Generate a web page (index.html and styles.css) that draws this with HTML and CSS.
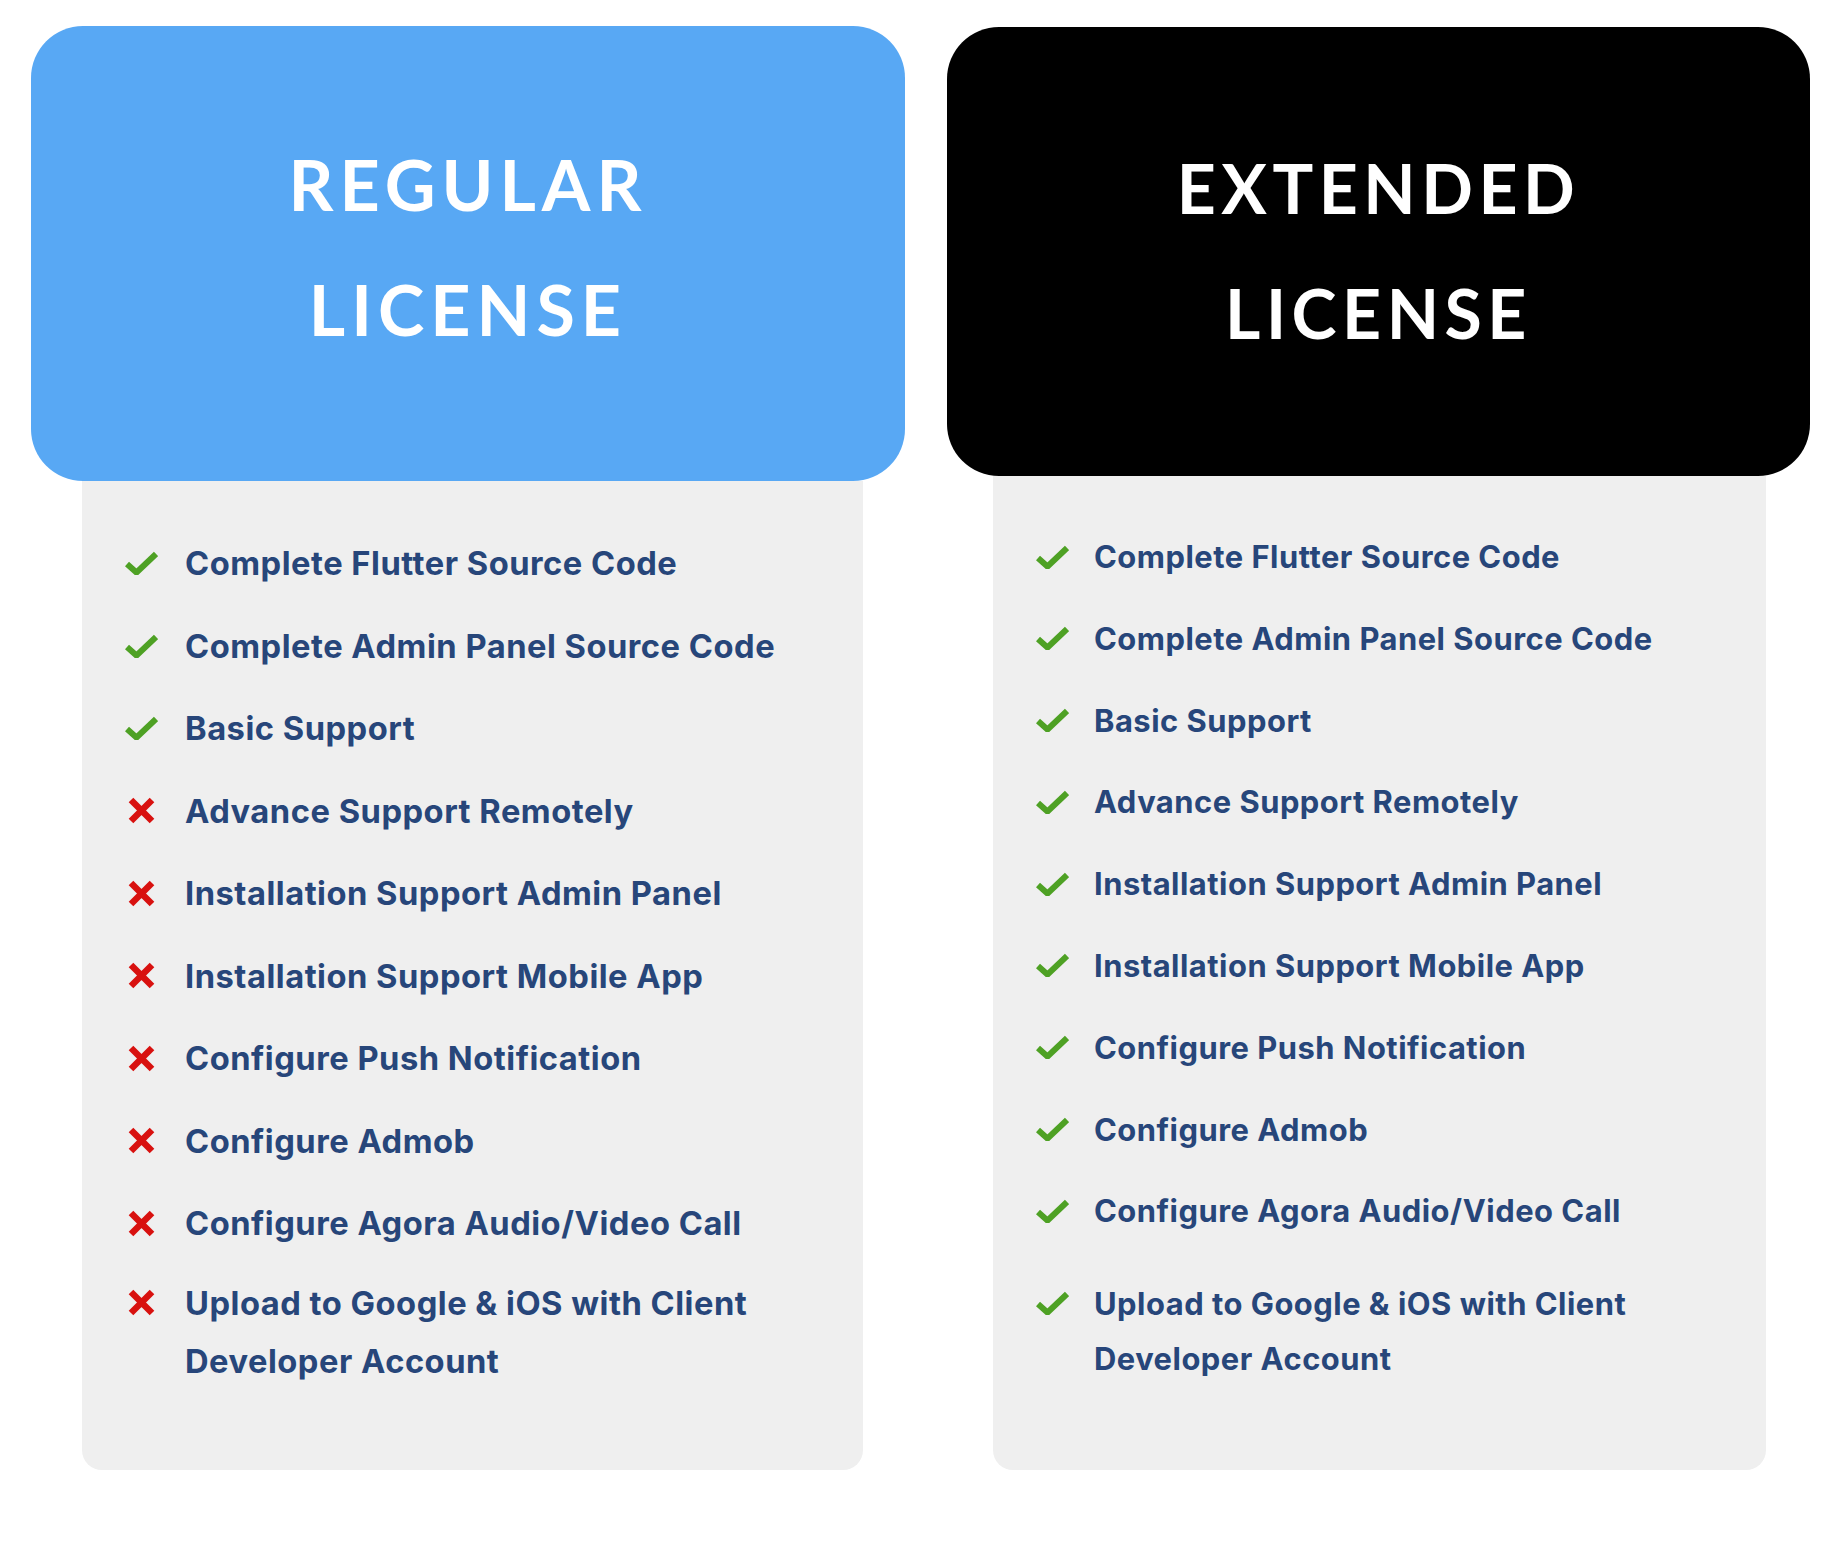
FILE: index.html
```html
<!DOCTYPE html>
<html lang="en">
<head>
<meta charset="utf-8">
<title>Licenses</title>
<link rel="stylesheet" href="styles.css">
</head>
<body>
<main class="pricing">
  <section class="plan plan-regular">
    <header class="plan-head head-blue">
      <h2 class="plan-title">REGULAR<br>LICENSE</h2>
    </header>
    <div class="plan-body body-regular">
      <ul class="features">
        <li class="feature"><span class="ico"><svg class="check" viewBox="0 0 33 24"><path d="M2 13 L11.5 21.5 L31 3"/></svg></span><span class="ftext">Complete Flutter Source Code</span></li>
        <li class="feature"><span class="ico"><svg class="check" viewBox="0 0 33 24"><path d="M2 13 L11.5 21.5 L31 3"/></svg></span><span class="ftext">Complete Admin Panel Source Code</span></li>
        <li class="feature"><span class="ico"><svg class="check" viewBox="0 0 33 24"><path d="M2 13 L11.5 21.5 L31 3"/></svg></span><span class="ftext">Basic Support</span></li>
        <li class="feature"><span class="ico"><svg class="cross" viewBox="0 0 27 27"><path d="M3 3 L24 24 M24 3 L3 24"/></svg></span><span class="ftext">Advance Support Remotely</span></li>
        <li class="feature"><span class="ico"><svg class="cross" viewBox="0 0 27 27"><path d="M3 3 L24 24 M24 3 L3 24"/></svg></span><span class="ftext">Installation Support Admin Panel</span></li>
        <li class="feature"><span class="ico"><svg class="cross" viewBox="0 0 27 27"><path d="M3 3 L24 24 M24 3 L3 24"/></svg></span><span class="ftext">Installation Support Mobile App</span></li>
        <li class="feature"><span class="ico"><svg class="cross" viewBox="0 0 27 27"><path d="M3 3 L24 24 M24 3 L3 24"/></svg></span><span class="ftext">Configure Push Notification</span></li>
        <li class="feature"><span class="ico"><svg class="cross" viewBox="0 0 27 27"><path d="M3 3 L24 24 M24 3 L3 24"/></svg></span><span class="ftext">Configure Admob</span></li>
        <li class="feature"><span class="ico"><svg class="cross" viewBox="0 0 27 27"><path d="M3 3 L24 24 M24 3 L3 24"/></svg></span><span class="ftext">Configure Agora Audio/Video Call</span></li>
        <li class="feature feature-last"><span class="ico"><svg class="cross" viewBox="0 0 27 27"><path d="M3 3 L24 24 M24 3 L3 24"/></svg></span><span class="ftext">Upload to Google &amp; iOS with Client Developer Account</span></li>
      </ul>
    </div>
  </section>

  <section class="plan plan-extended">
    <header class="plan-head head-black">
      <h2 class="plan-title">EXTENDED<br>LICENSE</h2>
    </header>
    <div class="plan-body body-extended">
      <ul class="features">
        <li class="feature"><span class="ico"><svg class="check" viewBox="0 0 33 24"><path d="M2 13 L11.5 21.5 L31 3"/></svg></span><span class="ftext">Complete Flutter Source Code</span></li>
        <li class="feature"><span class="ico"><svg class="check" viewBox="0 0 33 24"><path d="M2 13 L11.5 21.5 L31 3"/></svg></span><span class="ftext">Complete Admin Panel Source Code</span></li>
        <li class="feature"><span class="ico"><svg class="check" viewBox="0 0 33 24"><path d="M2 13 L11.5 21.5 L31 3"/></svg></span><span class="ftext">Basic Support</span></li>
        <li class="feature"><span class="ico"><svg class="check" viewBox="0 0 33 24"><path d="M2 13 L11.5 21.5 L31 3"/></svg></span><span class="ftext">Advance Support Remotely</span></li>
        <li class="feature"><span class="ico"><svg class="check" viewBox="0 0 33 24"><path d="M2 13 L11.5 21.5 L31 3"/></svg></span><span class="ftext">Installation Support Admin Panel</span></li>
        <li class="feature"><span class="ico"><svg class="check" viewBox="0 0 33 24"><path d="M2 13 L11.5 21.5 L31 3"/></svg></span><span class="ftext">Installation Support Mobile App</span></li>
        <li class="feature"><span class="ico"><svg class="check" viewBox="0 0 33 24"><path d="M2 13 L11.5 21.5 L31 3"/></svg></span><span class="ftext">Configure Push Notification</span></li>
        <li class="feature"><span class="ico"><svg class="check" viewBox="0 0 33 24"><path d="M2 13 L11.5 21.5 L31 3"/></svg></span><span class="ftext">Configure Admob</span></li>
        <li class="feature"><span class="ico"><svg class="check" viewBox="0 0 33 24"><path d="M2 13 L11.5 21.5 L31 3"/></svg></span><span class="ftext">Configure Agora Audio/Video Call</span></li>
        <li class="feature feature-last"><span class="ico"><svg class="check" viewBox="0 0 33 24"><path d="M2 13 L11.5 21.5 L31 3"/></svg></span><span class="ftext">Upload to Google &amp; iOS with Client Developer Account</span></li>
      </ul>
    </div>
  </section>
</main>
</body>
</html>
```

FILE: styles.css
```css
* { box-sizing: border-box; }

html, body {
  margin: 0;
  padding: 0;
  background: #ffffff;
}

body {
  font-family: Lato, "Liberation Sans", Arial, sans-serif;
  width: 1838px;
  min-height: 1559px;
}

.pricing {
  display: flex;
  align-items: stretch;
  gap: 42px;
  padding: 26px 0 0 31px;
}

.plan {
  display: flex;
  flex-direction: column;
}

.plan-regular { width: 874px; }
.plan-extended { width: 863px; margin-top: 1px; }

.plan-head {
  border-radius: 52px;
  text-align: center;
  color: #ffffff;
  position: relative;
  z-index: 1;
}

.head-blue {
  background: #58a8f4;
  height: 455px;
  padding-top: 96px;
}

.head-black {
  background: #000000;
  height: 449px;
  padding-top: 98px;
}

.plan-title {
  margin: 0;
  font-weight: 700;
  font-size: 70px;
  line-height: 125px;
  letter-spacing: 6px;
}

.head-black .plan-title {
  font-size: 68px;
  letter-spacing: 5.5px;
}

.plan-body {
  flex: 1;
  background: #efefef;
  border-radius: 0 0 20px 20px;
}

.body-regular {
  width: 781px;
  margin-left: 51px;
  padding: 53px 30px 56px 42px;
}

.body-extended {
  width: 773px;
  margin-left: 46px;
  padding: 53px 30px 56px 42px;
}

.features {
  list-style: none;
  margin: 0;
  padding: 0;
  display: flex;
  flex-direction: column;
}

.feature {
  display: flex;
  align-items: flex-start;
  color: #27467a;
  font-family: Inter, Lato, "Liberation Sans", sans-serif;
  font-weight: 700;
  letter-spacing: 0.5px;
}

.body-regular .feature {
  font-size: 32.7px;
  line-height: 58px;
  margin-bottom: 24.5px;
}

.body-extended .feature {
  font-size: 30.9px;
  line-height: 55px;
  margin-bottom: 26.8px;
}

.body-regular .feature-last { margin-top: -3px; }
.body-extended .feature-last { margin-top: 10.5px; }

.ico {
  flex: 0 0 35px;
  height: 1lh;
  display: flex;
  align-items: center;
  justify-content: center;
  margin-right: 26px;
}

.body-extended .ico { margin-right: 24px; }

.check {
  width: 33px;
  height: 24px;
  fill: none;
  stroke: #4ea124;
  stroke-width: 6;
  stroke-linejoin: miter;
}

.cross {
  width: 27px;
  height: 27px;
  fill: none;
  stroke: #d8110f;
  stroke-width: 6.5;
}

.ftext {
  flex: 0 1 auto;
}

.body-regular .ftext { max-width: 650px; }
.body-extended .ftext { max-width: 610px; }
```
